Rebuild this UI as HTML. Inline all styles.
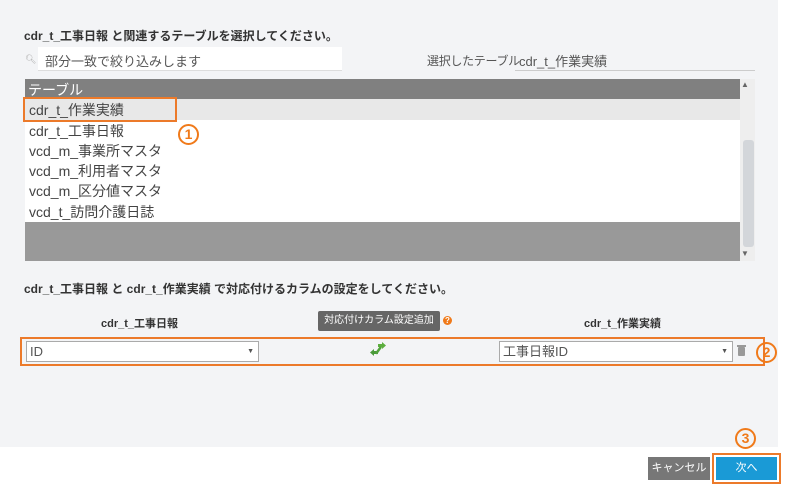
<!DOCTYPE html>
<html><head><meta charset="utf-8"><style>
body{margin:0;width:794px;height:486px;position:relative;overflow:hidden;background:#fff;font-family:"Liberation Sans","Noto Sans CJK JP",sans-serif;}
.bg{position:absolute;left:0;top:0;width:778px;height:447px;background:#f3f4f6;}
.a{position:absolute;}
.t{font-size:12px;font-weight:bold;color:#333;}
.row{position:absolute;left:29px;font-size:14px;color:#444;}
.num{position:absolute;width:17px;height:17px;border:2px solid #f07a1a;border-radius:50%;color:#f07a1a;font-size:14px;font-weight:bold;text-align:center;line-height:17px;}
</style></head><body>
<div class="bg"></div>
<div class="a t" style="left:24px;top:27px">cdr_t_工事日報 と関連するテーブルを選択してください。</div>
<div class="a" style="left:25px;top:54px;font-size:9px;color:#aaa">&#x1F50D;&#xFE0E;</div>
<div class="a" style="left:38px;top:47px;width:304px;height:23px;background:#fff;border-bottom:1px solid #ddd"></div>
<div class="a" style="left:45px;top:51px;font-size:13px;color:#555">部分一致で絞り込みします</div>
<div class="a" style="left:427px;top:52px;font-size:12px;color:#555;letter-spacing:-0.3px">選択したテーブル</div>
<div class="a" style="left:515px;top:47px;width:240px;height:23px;border-bottom:1px solid #ccc"></div>
<div class="a" style="left:519px;top:51px;font-size:13px;color:#555">cdr_t_作業実績</div>
<div class="a" style="left:25px;top:79px;width:730px;height:182px;background:#fff"></div>
<div class="a" style="left:25px;top:79px;width:715px;height:20px;background:#808080"></div>
<div class="a" style="left:28px;top:80px;font-size:14px;color:#fff">テーブル</div>
<div class="a" style="left:25px;top:99px;width:715px;height:21px;background:#e8e8e8"></div>
<div class="a" style="left:25px;top:222px;width:715px;height:39px;background:#999"></div>
<div class="a" style="left:740px;top:79px;width:15px;height:182px;background:#eee"></div>
<div class="a" style="left:743px;top:140px;width:11px;height:107px;background:#d3d6da;border-radius:3px"></div>
<div class="a" style="left:741px;top:80px;font-size:8px;color:#666">▲</div>
<div class="a" style="left:741px;top:249px;font-size:8px;color:#666">▼</div>
<div class="row" style="top:100px">cdr_t_作業実績</div>
<div class="row" style="top:121px">cdr_t_工事日報</div>
<div class="row" style="top:141px">vcd_m_事業所マスタ</div>
<div class="row" style="top:161px">vcd_m_利用者マスタ</div>
<div class="row" style="top:181px">vcd_m_区分値マスタ</div>
<div class="row" style="top:202px">vcd_t_訪問介護日誌</div>
<div class="a" style="left:23px;top:97px;width:154px;height:25px;border:2px solid #ec7a2a;box-sizing:border-box"></div>
<div class="num" style="left:178px;top:124px">1</div>
<div class="a t" style="left:24px;top:280px">cdr_t_工事日報 と cdr_t_作業実績 で対応付けるカラムの設定をしてください。</div>
<div class="a t" style="left:101px;top:315px;font-size:11px">cdr_t_工事日報</div>
<div class="a t" style="left:584px;top:315px;font-size:11px">cdr_t_作業実績</div>
<div class="a" style="left:318px;top:311px;width:122px;height:20px;background:#666;border-radius:2px;color:#fff;font-size:10px;text-align:center;line-height:20px">対応付けカラム設定追加</div>
<div class="a" style="left:443px;top:316px;width:9px;height:9px;border-radius:50%;background:#f07a1a;color:#fff;font-size:8px;line-height:9px;text-align:center;font-weight:bold">?</div>
<div class="a" style="left:20px;top:337px;width:745px;height:29px;border:2px solid #ec7a2a;box-sizing:border-box"></div>
<div class="a" style="left:26px;top:341px;width:233px;height:21px;background:#fff;border:1px solid #aaa;box-sizing:border-box;font-size:13px;color:#555;padding-left:3px;line-height:19px">ID<span style="position:absolute;right:4px;font-size:7px">▼</span></div>
<div class="a" style="left:499px;top:341px;width:234px;height:21px;background:#fff;border:1px solid #aaa;box-sizing:border-box;font-size:13px;color:#555;padding-left:3px;line-height:19px">工事日報ID<span style="position:absolute;right:4px;font-size:7px">▼</span></div>
<svg class="a" style="left:369px;top:342px" width="18" height="16" viewBox="0 0 18 16"><path d="M9 2h4V0l4 3.5-4 3.5V5H9z" fill="#5cae3e"/><path d="M9 9H5V7l-4 3.5 4 3.5v-2h4z" fill="#4a9a3a"/><path d="M6 11l5-7 2 1.5-5 7z" fill="#52a33c"/></svg>
<svg class="a" style="left:737px;top:344px" width="9" height="12"><rect x="0" y="1" width="9" height="2" fill="#999"/><rect x="1" y="3" width="7" height="9" rx="1" fill="#999"/></svg>
<div class="num" style="left:756px;top:342px">2</div>
<div class="num" style="left:735px;top:428px">3</div>
<div class="a" style="left:648px;top:457px;width:62px;height:23px;background:#777;color:#fff;font-size:11px;text-align:center;line-height:23px">キャンセル</div>
<div class="a" style="left:712px;top:453px;width:69px;height:31px;border:2px solid #ec7a2a;box-sizing:border-box"></div>
<div class="a" style="left:716px;top:457px;width:61px;height:23px;background:#1a9ad6;color:#fff;font-size:11px;text-align:center;line-height:23px">次へ</div>
</body></html>
